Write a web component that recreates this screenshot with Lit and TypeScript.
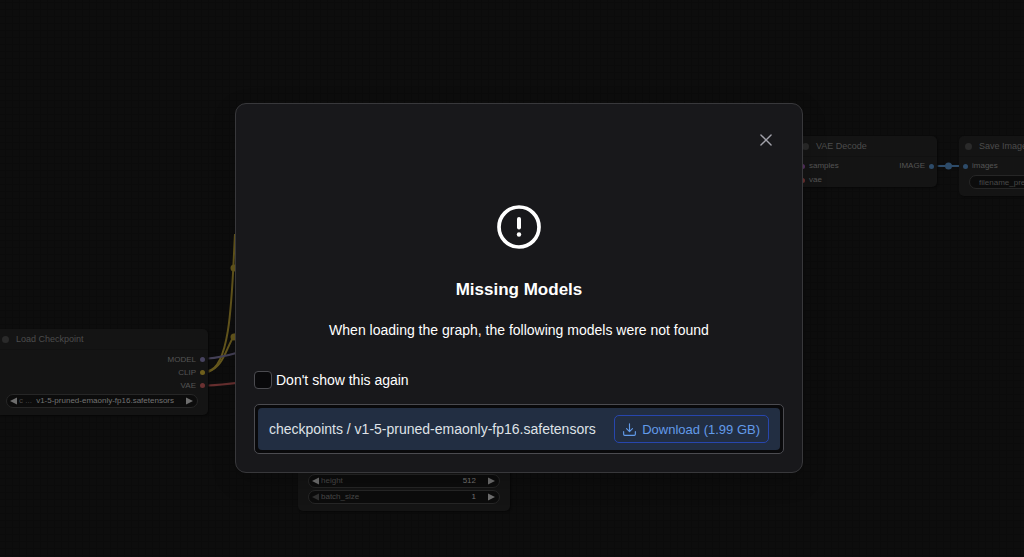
import { LitElement, html, css, svg } from "lit";
import { customElement, property } from "lit/decorators.js";

interface Widget {
  label: string;
  value: string;
  atMin?: boolean;
}

@customElement("graph-widget")
class GraphWidget extends LitElement {
  @property({ attribute: false }) widget!: Widget;

  static styles = css`
    :host { display: block; }
    .pill {
      display: flex;
      align-items: center;
      box-sizing: border-box;
      height: 14px;
      padding: 0 4px 0 3px;
      border: 1px solid #262626;
      border-radius: 7px;
      background: #0c0c0c;
      color: #484848;
      font-size: 8px;
      line-height: 12px;
      white-space: nowrap;
    }
    .arrow {
      display: flex;
      padding: 0;
      border: 0;
      background: none;
      color: #6e6e6e;
    }
    .arrow:disabled { color: #303030; }
    .arrow svg { display: block; width: 7px; height: 8px; }
    .label { padding-left: 2px; }
    .value {
      flex: 1;
      text-align: right;
      padding-right: 12px;
      color: #737373;
    }
  `;

  render() {
    const { label, value, atMin } = this.widget;
    return html`<div class="pill">
      <button class="arrow" aria-label="Previous" ?disabled=${atMin}>
        <svg viewBox="0 0 7 8"><path d="M7 0.5V7.5L0 4Z" fill="currentColor" /></svg>
      </button>
      <span class="label">${label}</span>
      <span class="value">${value}</span>
      <button class="arrow" aria-label="Next">
        <svg viewBox="0 0 7 8"><path d="M0 0.5V7.5L7 4Z" fill="currentColor" /></svg>
      </button>
    </div>`;
  }
}

@customElement("graph-canvas")
class GraphCanvas extends LitElement {
  static styles = css`
    :host {
      display: block;
      position: absolute;
      inset: 0;
      overflow: hidden;
      background-color: #0d0d0d;
      background-image:
        linear-gradient(90deg, #0b0b0b 1px, transparent 1px),
        linear-gradient(#0b0b0b 1px, transparent 1px);
      background-size: 7px 7px;
      background-position: 5px 2px;
    }
    .links { position: absolute; left: 0; top: 0; width: 1200px; height: 600px; }
    .node {
      position: absolute;
      box-sizing: border-box;
      padding-bottom: 7px;
      border-radius: 5px;
      background: #141414;
      color: #555555;
      font-size: 8px;
      line-height: 14px;
      box-shadow: 1px 1px 2px #080808;
    }
    .checkpoint { left: -4px; top: 329px; width: 212px; }
    .latent { left: 298px; top: 415px; width: 212px; }
    .decode { left: 796px; top: 136px; width: 141px; padding-bottom: 0; }
    .save { left: 959px; top: 136px; width: 200px; }
    .title {
      display: flex;
      align-items: center;
      gap: 7px;
      height: 20px;
      padding-left: 6px;
      border-bottom: 1px solid #111111;
      font-size: 9px;
      color: #4c4c4c;
    }
    .title::before {
      content: "";
      width: 7px;
      height: 7px;
      border-radius: 50%;
      background: #2a2a2a;
    }
    .slots { display: flex; justify-content: space-between; padding: 2px 3px 2px 4px; }
    .checkpoint .slots { justify-content: flex-end; padding-top: 3px; }
    .slot { display: flex; align-items: center; gap: 4px; height: 14px; }
    .out { justify-content: flex-end; }
    .checkpoint .slot { height: 13px; }
    .decode .slots { padding-bottom: 0; }
    .dot { width: 5px; height: 5px; border-radius: 50%; }
    .model { background: #47435f; }
    .clip { background: #6f5f1c; }
    .vae { background: #6a3131; }
    .latentdot { background: #553060; }
    .image { background: #2d4b69; }
    .widgets { display: grid; gap: 2px; padding: 0 10px; }
    .latent .widgets { padding-top: 43px; }
    .filename {
      display: block;
      box-sizing: border-box;
      width: 100%;
      height: 14px;
      padding: 0 9px;
      border: 1px solid #262626;
      border-radius: 7px;
      background: #0c0c0c;
      color: #484848;
      font: 8px "Liberation Sans", Arial, sans-serif;
    }
  `;

  private links() {
    return svg`
      <g fill="none" stroke-width="2">
        <path d="M208 371C232 367 232 285 235 234" stroke="#66581d" />
        <path d="M208 372C224 366 225 350 235 334" stroke="#66581d" />
        <path d="M208 358.500C218 358 226 356 240 352" stroke="#454157" />
        <path d="M208 385.500C220 385 228 384 240 382.500" stroke="#672f2f" />
        <path d="M937 166H960" stroke="#2d4b69" />
      </g>
      <circle cx="234" cy="268" r="3.500" fill="#66581d" />
      <circle cx="234" cy="337" r="3.500" fill="#66581d" />
      <circle cx="948.500" cy="166" r="3.500" fill="#2d4b69" />`;
  }

  render() {
    return html`
      <svg class="links" viewBox="0 0 1200 600">${this.links()}</svg>
      <section class="node checkpoint">
        <div class="title">Load Checkpoint</div>
        <div class="slots">
          <div>
            <div class="slot out">MODEL<i class="dot model"></i></div>
            <div class="slot out">CLIP<i class="dot clip"></i></div>
            <div class="slot out">VAE<i class="dot vae"></i></div>
          </div>
        </div>
        <div class="widgets">
          <graph-widget .widget=${{ label: "c ...", value: "v1-5-pruned-emaonly-fp16.safetensors" }}></graph-widget>
        </div>
      </section>
      <section class="node latent">
        <div class="widgets">
          <graph-widget .widget=${{ label: "height", value: "512" }}></graph-widget>
          <graph-widget .widget=${{ label: "height", value: "512" }}></graph-widget>
          <graph-widget .widget=${{ label: "batch_size", value: "1", atMin: true }}></graph-widget>
        </div>
      </section>
      <section class="node decode">
        <div class="title">VAE Decode</div>
        <div class="slots">
          <div>
            <div class="slot"><i class="dot latentdot"></i>samples</div>
            <div class="slot"><i class="dot vae"></i>vae</div>
          </div>
          <div class="slot">IMAGE<i class="dot image"></i></div>
        </div>
      </section>
      <section class="node save">
        <div class="title">Save Image</div>
        <div class="slots">
          <div class="slot"><i class="dot image"></i>images</div>
        </div>
        <div class="widgets">
          <input class="filename" aria-label="filename_prefix" value="filename_prefix" />
        </div>
      </section>
    `;
  }
}

@customElement("missing-models-dialog")
class MissingModelsDialog extends LitElement {
  static styles = css`
    :host { display: block; width: min(568px, 100%); }
    .dialog {
      box-sizing: border-box;
      padding: 18px;
      border: 1px solid #38383b;
      border-radius: 11px;
      background: #18181b;
      color: #ffffff;
      font-size: 14px;
      line-height: 20px;
      box-shadow: 0 8px 24px rgba(0, 0, 0, 0.2);
    }
    .head { display: flex; justify-content: flex-end; }
    .close {
      display: grid;
      place-items: center;
      width: 36px;
      height: 36px;
      padding: 0;
      border: 0;
      border-radius: 50%;
      background: none;
      color: #a1a1aa;
    }
    .close svg { width: 12px; height: 12px; }
    .message {
      display: flex;
      flex-direction: column;
      align-items: center;
      padding: 47px 0 30px;
      text-align: center;
    }
    .alert { width: 44px; height: 44px; }
    h3 { margin: 30px 0 19px; font-size: 17px; line-height: 22px; }
    p { margin: 0; }
    .again { display: flex; align-items: center; gap: 4px; width: max-content; }
    .box {
      appearance: none;
      box-sizing: border-box;
      width: 18px;
      height: 18px;
      margin: 0;
      border: 1px solid #4b4b50;
      border-radius: 4px;
      background: #09090b;
    }
    .list {
      margin: 14px 0 0;
      padding: 3px;
      border: 1px solid #4b4b50;
      border-radius: 5px;
      background: #09090b;
      list-style: none;
    }
    .item {
      display: flex;
      align-items: center;
      justify-content: space-between;
      gap: 8px;
      padding: 7px 11px;
      border-radius: 4px;
      background: #222e42;
      color: #dfe2e7;
    }
    .download {
      display: flex;
      align-items: center;
      gap: 6px;
      box-sizing: border-box;
      height: 28px;
      padding: 0 8px;
      border: 1px solid #2746ae;
      border-radius: 5px;
      background: none;
      color: #629bea;
      font: 13px "Liberation Sans", Arial, sans-serif;
      white-space: nowrap;
    }
    .download svg { width: 13px; height: 13px; }
  `;

  render() {
    return html`<div class="dialog" role="dialog" aria-labelledby="heading">
      <div class="head">
        <button class="close" aria-label="Close">
          <svg viewBox="0 0 13 13" fill="none" stroke="currentColor" stroke-width="1.500" stroke-linecap="round">
            <path d="M1 1L12 12M12 1L1 12" />
          </svg>
        </button>
      </div>
      <div class="message">
        <svg class="alert" viewBox="0 0 44 44" fill="none" stroke="#ffffff" stroke-linecap="round">
          <circle cx="22" cy="22" r="20" stroke-width="3.700" />
          <path d="M22 14V22.500" stroke-width="4" />
          <circle cx="22" cy="29.500" r="2.200" fill="#ffffff" stroke="none" />
        </svg>
        <h3 id="heading">Missing Models</h3>
        <p>When loading the graph, the following models were not found</p>
      </div>
      <div class="again">
        <input class="box" type="checkbox" id="again" />
        <label for="again">Don't show this again</label>
      </div>
      <ul class="list">
        <li class="item">
          <span>checkpoints / v1-5-pruned-emaonly-fp16.safetensors</span>
          <button class="download">
            <svg viewBox="0 0 14 14" fill="none" stroke="currentColor" stroke-width="1.200" stroke-linecap="round" stroke-linejoin="round">
              <path d="M7 0.800V9M3.800 6L7 9.200L10.200 6" />
              <path d="M0.700 9.300V12.200Q0.700 13.300 1.800 13.300H12.200Q13.300 13.300 13.300 12.200V9.300" />
            </svg>
            Download (1.99 GB)
          </button>
        </li>
      </ul>
    </div>`;
  }
}

@customElement("app-root")
class AppRoot extends LitElement {
  static styles = css`
    :host {
      display: block;
      position: relative;
      min-height: 100vh;
      overflow: hidden;
      font-family: "Liberation Sans", Arial, sans-serif;
    }
    .mask {
      position: relative;
      display: flex;
      align-items: center;
      justify-content: center;
      box-sizing: border-box;
      min-height: 100vh;
      padding: 19px 0 0 14px;
    }
  `;

  render() {
    return html`
      <graph-canvas></graph-canvas>
      <div class="mask"><missing-models-dialog></missing-models-dialog></div>
    `;
  }
}
